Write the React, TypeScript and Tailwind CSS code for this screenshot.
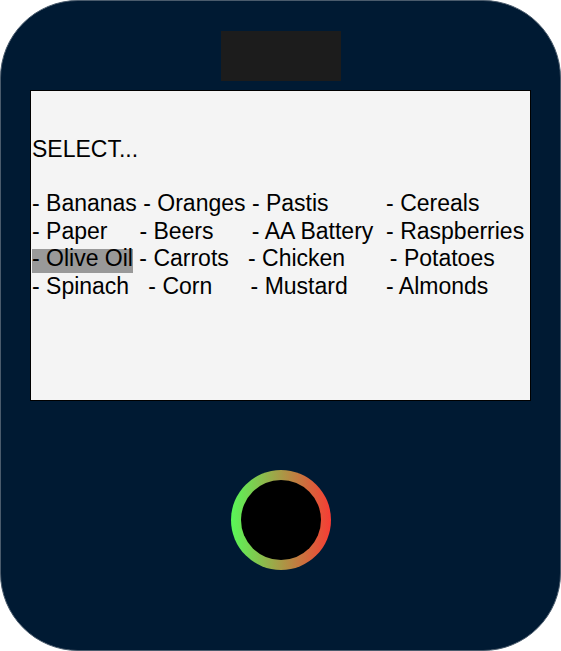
import React from "react";

const sp = (n: number) => " ".repeat(n);

type Item = { t: string; gap: number; hl?: boolean };

const rows: Item[][] = [
  [
    { t: "- Bananas", gap: 1 },
    { t: "- Oranges", gap: 1 },
    { t: "- Pastis", gap: 9 },
    { t: "- Cereals", gap: 0 },
  ],
  [
    { t: "- Paper", gap: 5 },
    { t: "- Beers", gap: 6 },
    { t: "- AA Battery", gap: 2 },
    { t: "- Raspberries", gap: 0 },
  ],
  [
    { t: "- Olive Oil", gap: 1, hl: true },
    { t: "- Carrots", gap: 3 },
    { t: "- Chicken", gap: 7 },
    { t: "- Potatoes", gap: 0 },
  ],
  [
    { t: "- Spinach", gap: 3 },
    { t: "- Corn", gap: 6 },
    { t: "- Mustard", gap: 6 },
    { t: "- Almonds", gap: 0 },
  ],
];

export default function App() {
  return (
    <div className="w-[561px] h-[651px] bg-white">
      <div className="w-[561px] h-[651px] rounded-[78px] bg-[#001a33] border border-[#4a5b6c] flex flex-col items-center">
        <div className="mt-[30px] w-[120px] h-[50px] bg-[#1c1c1c]" />
        <div
          className="mt-[9px] w-[501px] h-[311px] border border-black bg-[#f4f4f4] pl-[1px] pt-[45px] text-black text-[23px] leading-[27.75px] whitespace-pre overflow-hidden"
          style={{ fontFamily: '"Liberation Sans", Arial, Helvetica, sans-serif' }}
        >
          <div>SELECT...</div>
          <div className="mt-[26px]">
            {rows.map((row, i) => (
              <div key={i}>
                {row.map((it, j) =>
                  it.hl ? (
                    <React.Fragment key={j}>
                      <span className="inline-block h-[23.3px] leading-[18.1px] bg-[#999999] align-baseline">
                        {it.t}
                      </span>
                      <span>{sp(it.gap)}</span>
                    </React.Fragment>
                  ) : (
                    <span key={j}>{it.t + sp(it.gap)}</span>
                  )
                )}
              </div>
            ))}
          </div>
        </div>
        <div className="mt-[69px] w-[100px] h-[100px] rounded-full bg-[linear-gradient(to_right,#58f858,#f83c34)] flex items-center justify-center">
          <div className="w-[80px] h-[80px] rounded-full bg-black" />
        </div>
      </div>
    </div>
  );
}
